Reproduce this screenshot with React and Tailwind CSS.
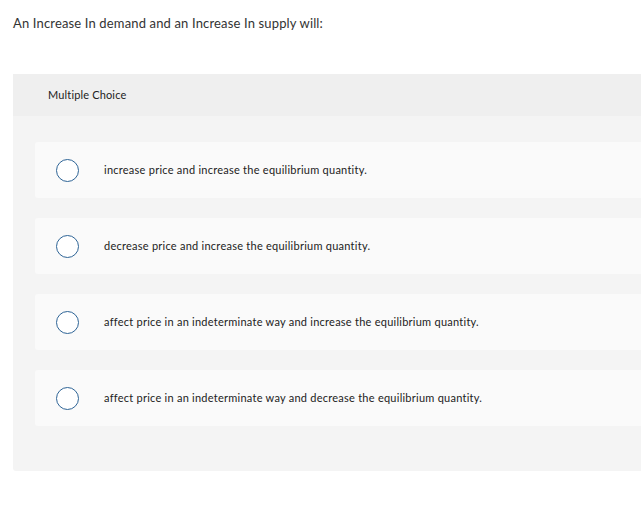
const options = [
  'increase price and increase the equilibrium quantity.',
  'decrease price and increase the equilibrium quantity.',
  'affect price in an indeterminate way and increase the equilibrium quantity.',
  'affect price in an indeterminate way and decrease the equilibrium quantity.',
];

export default function App() {
  return (
    <div className="min-h-screen bg-white font-['Lato','Open_Sans',sans-serif] text-[#1f1f1f]">
      <div className="pl-[13px] pt-[14px]">
        <p className="text-[13px] leading-[18px] tracking-[0.15px] text-[#333]">
          An Increase In demand and an Increase In supply will:
        </p>
      </div>

      <div className="ml-[13px] mt-[42px] rounded-l-[3px] bg-[#f4f4f4] pb-[45px]">
        <div className="h-[42px] bg-[#efefef] pl-[35px] flex items-center">
          <span className="text-[11px] tracking-[0.15px] text-[#222]">Multiple Choice</span>
        </div>

        <div className="pl-[22px] pt-[26px] flex flex-col gap-[20px]">
          {options.map((text) => (
            <div
              key={text}
              className="h-[56px] rounded-l-[3px] bg-[#fafafa] flex items-center"
            >
              <span className="ml-[21px] h-[23px] w-[23px] rounded-full border-[1.5px] border-[#2e6496] bg-white" />
              <span className="ml-[25px] text-[11px] tracking-[0.25px] text-[#222]">{text}</span>
            </div>
          ))}
        </div>
      </div>
    </div>
  );
}
